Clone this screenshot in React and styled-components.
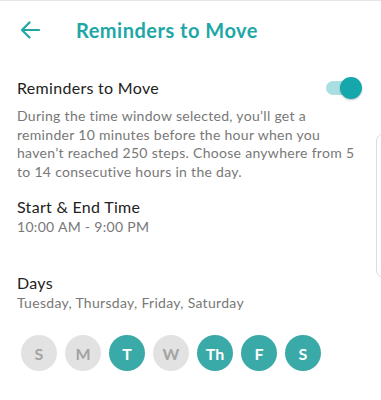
import React from "react";
import styled, { createGlobalStyle } from "styled-components";

const GlobalStyle = createGlobalStyle`
  html, body {
    margin: 0;
    padding: 0;
    background: #ffffff;
  }
  body {
    font-family: "Lato", "Open Sans", sans-serif;
    -webkit-font-smoothing: antialiased;
  }
`;

const Screen = styled.div`
  position: relative;
  width: 381px;
  height: 400px;
  overflow: hidden;
  background: #fff;
  border-top: 1px solid #e6e6e6;
  box-sizing: border-box;
`;

const Header = styled.div`
  display: flex;
  align-items: center;
  height: 58px;
  padding-left: 19px;
`;

const BackButton = styled.button`
  display: flex;
  align-items: center;
  justify-content: center;
  width: 22px;
  height: 22px;
  padding: 0;
  border: none;
  background: none;
  color: #1ea7a6;
  margin-right: 35px;
`;

const Title = styled.h1`
  margin: 0;
  font-size: 20px;
  font-weight: 700;
  color: #1ea7a6;
  letter-spacing: 0.5px;
`;

const Content = styled.div`
  padding: 18px 17px 0 17px;
`;

const ToggleRow = styled.div`
  display: flex;
  align-items: center;
  justify-content: space-between;
`;

const Label = styled.div`
  font-size: 16px;
  color: #222;
  line-height: 22px;
  letter-spacing: 0.3px;
`;

const Sub = styled.div`
  font-size: 14px;
  color: #787878;
  line-height: 18.5px;
  letter-spacing: 0.3px;
  margin-top: ${({ $gap }) => $gap || 0}px;
`;

const Track = styled.div`
  position: relative;
  width: 28px;
  height: 14px;
  border-radius: 7px;
  background: #a9dfe0;
  margin-right: 10px;
`;

const Knob = styled.div`
  position: absolute;
  top: -4px;
  right: -8px;
  width: 22px;
  height: 22px;
  border-radius: 50%;
  background: #16a7ac;
  box-shadow: 0 1px 2px rgba(0, 0, 0, 0.25);
`;

const Section = styled.div`
  margin-top: ${({ $top }) => $top}px;
`;

const DayRow = styled.div`
  display: flex;
  gap: 8px;
  margin-top: 23px;
  padding-left: 4px;
`;

const Day = styled.div`
  width: 36px;
  height: 36px;
  border-radius: 50%;
  display: flex;
  align-items: center;
  justify-content: center;
  font-size: 16px;
  font-weight: 700;
  background: ${({ $on }) => ($on ? "#3aaaa8" : "#e2e2e2")};
  color: ${({ $on }) => ($on ? "#ffffff" : "#a3a3a3")};
`;

const EdgeHandle = styled.div`
  position: absolute;
  top: 132px;
  left: 376px;
  width: 20px;
  height: 143px;
  border: 1px solid #dcdcdc;
  border-radius: 8px;
  background: #fff;
`;

const days = [
  { k: "S", on: false },
  { k: "M", on: false },
  { k: "T", on: true },
  { k: "W", on: false },
  { k: "Th", on: true },
  { k: "F", on: true },
  { k: "S", on: true },
];

export default function App() {
  return (
    <Screen>
      <GlobalStyle />
      <Header>
        <BackButton aria-label="Back">
          <svg width="20" height="18" viewBox="0 0 20 18" fill="none">
            <path
              d="M19 9H2M9.5 1.5L2 9l7.5 7.5"
              stroke="currentColor"
              strokeWidth="2.2"
              strokeLinecap="round"
              strokeLinejoin="round"
            />
          </svg>
        </BackButton>
        <Title>Reminders to Move</Title>
      </Header>
      <Content>
        <ToggleRow>
          <Label>Reminders to Move</Label>
          <Track>
            <Knob />
          </Track>
        </ToggleRow>
        <Sub $gap={8}>
          During the time window selected, you’ll get a reminder 10 minutes
          before the hour when you haven’t reached 250 steps. Choose anywhere
          from 5 to 14 consecutive hours in the day.
        </Sub>
        <Section $top={15}>
          <Label>Start &amp; End Time</Label>
          <Sub>10:00 AM - 9:00 PM</Sub>
        </Section>
        <Section $top={35}>
          <Label>Days</Label>
          <Sub>Tuesday, Thursday, Friday, Saturday</Sub>
        </Section>
        <DayRow>
          {days.map((d, i) => (
            <Day key={i} $on={d.on}>
              {d.k}
            </Day>
          ))}
        </DayRow>
      </Content>
      <EdgeHandle />
    </Screen>
  );
}
